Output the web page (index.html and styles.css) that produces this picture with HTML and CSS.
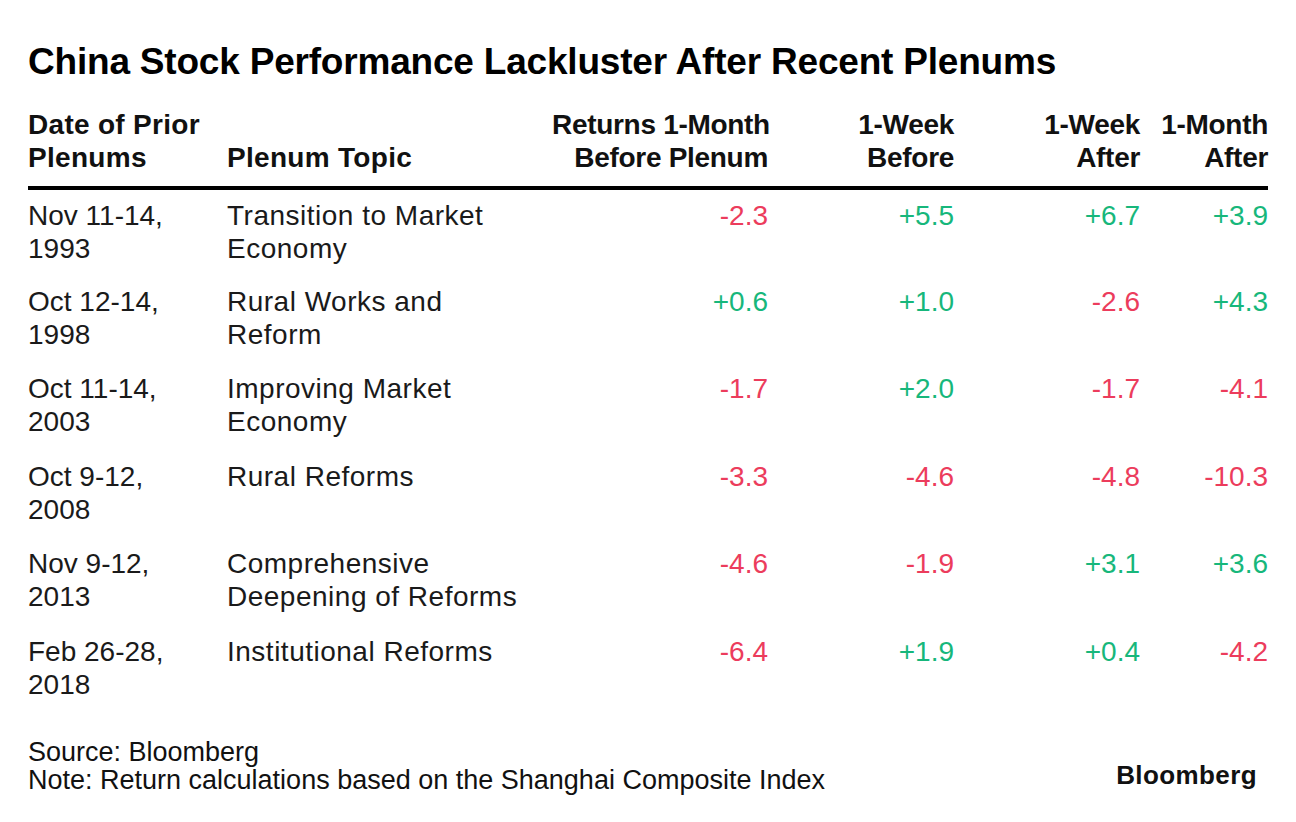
FILE: index.html
```html
<!DOCTYPE html>
<html lang="en">
<head>
<meta charset="utf-8">
<title>China Stock Performance Lackluster After Recent Plenums</title>
<link rel="stylesheet" href="styles.css">
</head>
<body>
<main class="chart">
  <h1 class="title">China Stock Performance Lackluster After Recent Plenums</h1>
  <table class="data">
    <thead>
      <tr>
        <th class="c-date">Date of Prior<br>Plenums</th>
        <th class="c-topic">Plenum Topic</th>
        <th class="c-num c-w1">Returns 1-Month<br>Before Plenum</th>
        <th class="c-num c-w2">1-Week<br>Before</th>
        <th class="c-num c-w3">1-Week<br>After</th>
        <th class="c-num c-w4">1-Month<br>After</th>
      </tr>
    </thead>
    <tbody>
      <tr>
        <td>Nov 11-14,<br>1993</td>
        <td class="topic">Transition to Market<br>Economy</td>
        <td class="c-num neg">-2.3</td>
        <td class="c-num pos">+5.5</td>
        <td class="c-num pos">+6.7</td>
        <td class="c-num pos">+3.9</td>
      </tr>
      <tr>
        <td>Oct 12-14,<br>1998</td>
        <td class="topic">Rural Works and<br>Reform</td>
        <td class="c-num pos">+0.6</td>
        <td class="c-num pos">+1.0</td>
        <td class="c-num neg">-2.6</td>
        <td class="c-num pos">+4.3</td>
      </tr>
      <tr>
        <td>Oct 11-14,<br>2003</td>
        <td class="topic">Improving Market<br>Economy</td>
        <td class="c-num neg">-1.7</td>
        <td class="c-num pos">+2.0</td>
        <td class="c-num neg">-1.7</td>
        <td class="c-num neg">-4.1</td>
      </tr>
      <tr>
        <td>Oct 9-12,<br>2008</td>
        <td class="topic">Rural Reforms</td>
        <td class="c-num neg">-3.3</td>
        <td class="c-num neg">-4.6</td>
        <td class="c-num neg">-4.8</td>
        <td class="c-num neg">-10.3</td>
      </tr>
      <tr>
        <td>Nov 9-12,<br>2013</td>
        <td class="topic">Comprehensive<br>Deepening of Reforms</td>
        <td class="c-num neg">-4.6</td>
        <td class="c-num neg">-1.9</td>
        <td class="c-num pos">+3.1</td>
        <td class="c-num pos">+3.6</td>
      </tr>
      <tr>
        <td>Feb 26-28,<br>2018</td>
        <td class="topic">Institutional Reforms</td>
        <td class="c-num neg">-6.4</td>
        <td class="c-num pos">+1.9</td>
        <td class="c-num pos">+0.4</td>
        <td class="c-num neg">-4.2</td>
      </tr>
    </tbody>
  </table>
  <footer class="foot">
    <div class="notes">
      <p>Source: Bloomberg</p>
      <p>Note: Return calculations based on the Shanghai Composite Index</p>
    </div>
    <div class="logo">Bloomberg</div>
  </footer>
</main>
</body>
</html>
```
FILE: styles.css
```css
* { box-sizing: border-box; }
html, body { margin: 0; padding: 0; background: #fff; }
body {
  font-family: "Liberation Sans", Arial, sans-serif;
  color: #111;
  width: 1296px;
  height: 822px;
  overflow: hidden;
}
.chart {
  padding: 40px 28px 0 28px;
}
.title {
  margin: 0;
  font-size: 37px;
  line-height: 44px;
  font-weight: 700;
  letter-spacing: -0.2px;
  color: #000;
}
.data {
  width: 100%;
  border-collapse: collapse;
  margin-top: 24px;
  table-layout: fixed;
}
.data th {
  font-size: 28px;
  line-height: 33px;
  font-weight: 700;
  text-align: left;
  vertical-align: bottom;
  padding: 0 0 12px 0;
  border-bottom: 4px solid #000;
  color: #111;
  letter-spacing: 0.3px;
  white-space: nowrap;
}
.data th.c-num { letter-spacing: -0.3px; }
.data td {
  font-size: 28px;
  line-height: 33px;
  vertical-align: top;
  padding: 9px 0 11px 0;
  height: 87.4px;
  color: #1a1a1a;
  white-space: nowrap;
}
.data td.topic { letter-spacing: 0.5px; }
.c-date { width: 199px; }
.c-topic { width: 325px; }
.c-w1 { width: 216px; }
.c-w2 { width: 186px; }
.c-w3 { width: 186px; }
.c-w4 { width: 128px; }
.data .c-num { text-align: right; }
.data .neg { color: #ec3c5c; }
.data .pos { color: #17b77b; }
.foot {
  margin-top: 25px;
  display: flex;
  justify-content: space-between;
  align-items: flex-end;
}
.notes p {
  margin: 0;
  font-size: 27px;
  line-height: 28px;
  color: #111;
}
.logo {
  font-size: 26px;
  font-weight: 700;
  letter-spacing: 0.4px;
  color: #111;
  margin-right: 11px;
  margin-bottom: 5px;
  line-height: 28px;
}
```
